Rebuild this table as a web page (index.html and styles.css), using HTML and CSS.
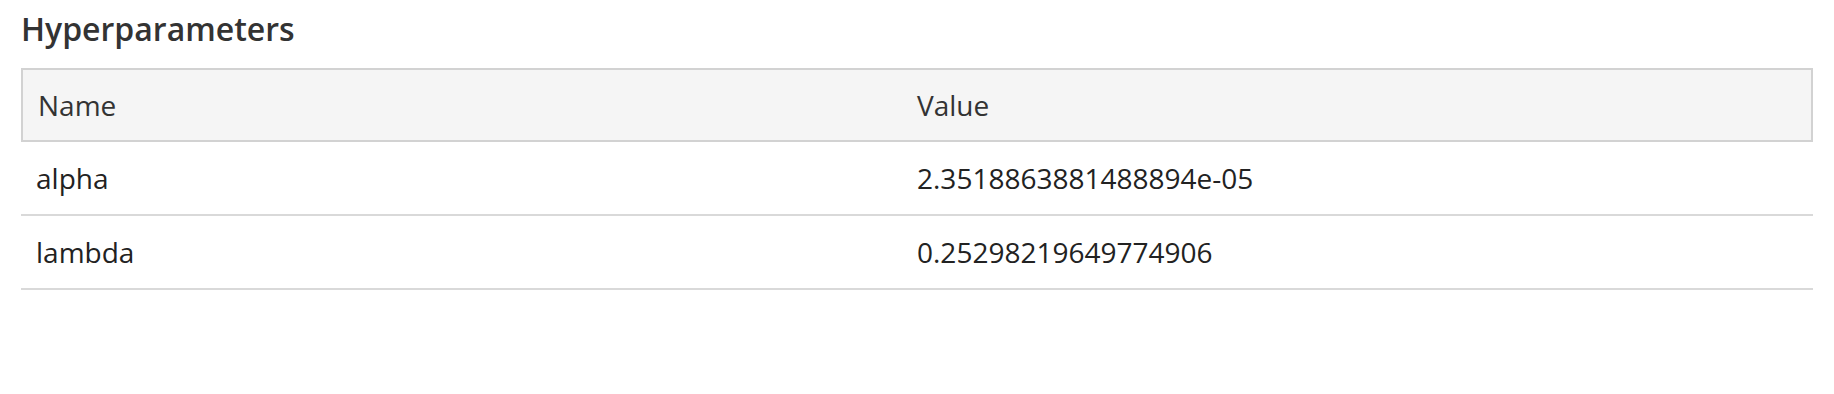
FILE: index.html
```html
<!DOCTYPE html>
<html lang="en">
<head>
<meta charset="utf-8">
<title>Hyperparameters</title>
<link rel="stylesheet" href="styles.css">
</head>
<body>
<section class="panel">
  <h2 class="panel-title">Hyperparameters</h2>
  <table class="param-table">
    <colgroup>
      <col class="col-name">
      <col class="col-value">
    </colgroup>
    <thead>
      <tr>
        <th>Name</th>
        <th>Value</th>
      </tr>
    </thead>
    <tbody>
      <tr>
        <td>alpha</td>
        <td>2.3518863881488894e-05</td>
      </tr>
      <tr>
        <td>lambda</td>
        <td>0.25298219649774906</td>
      </tr>
    </tbody>
  </table>
</section>
</body>
</html>
```
FILE: styles.css
```css
html, body {
  margin: 0;
  padding: 0;
  background: #ffffff;
}

body {
  font-family: "Open Sans", "Liberation Sans", sans-serif;
  color: #222222;
}

.panel {
  padding: 0 21px;
}

.panel-title {
  margin: 0;
  padding-top: 8px;
  font-size: 32px;
  font-weight: 600;
  line-height: 42px;
  color: #333333;
}

.param-table {
  margin-top: 18px;
  width: 100%;
  border-collapse: separate;
  border-spacing: 0;
  table-layout: fixed;
  font-size: 28px;
  line-height: 42px;
}

.col-name {
  width: 879px;
}

.param-table th {
  background: #f5f5f5;
  font-weight: 400;
  text-align: left;
  color: #333333;
  padding: 14px 17px;
  border-top: 2px solid #d2d2d2;
  border-bottom: 2px solid #d2d2d2;
}

.param-table th:first-child {
  padding-left: 15px;
  border-left: 2px solid #d2d2d2;
}

.param-table th:last-child {
  border-right: 2px solid #d2d2d2;
}

.param-table td {
  padding: 15px 17px 15px;
  border-bottom: 2px solid #d9d9d9;
  color: #222222;
}

.param-table td:first-child {
  padding-left: 15px;
}
```
